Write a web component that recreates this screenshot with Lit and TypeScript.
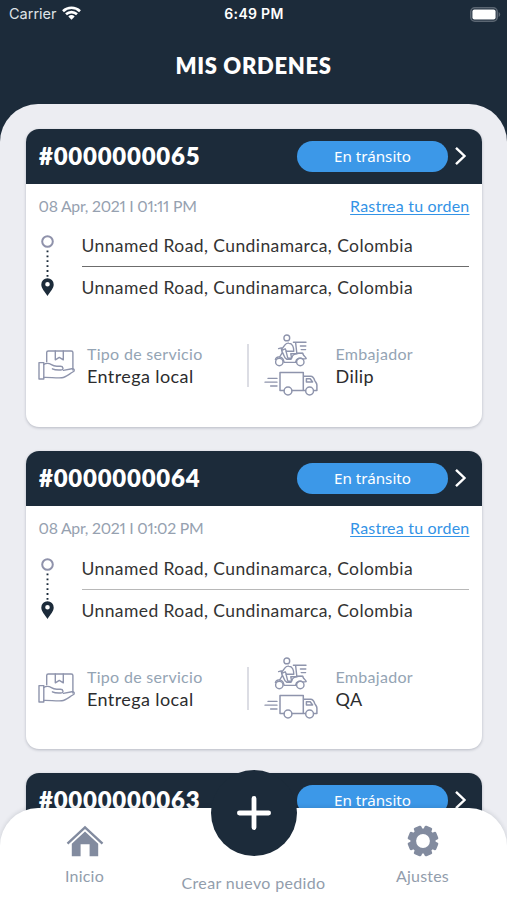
import { LitElement, html, css, svg, nothing } from "lit";
import { customElement, property } from "lit/decorators.js";

interface OrderDetails {
  date: string;
  from: string;
  to: string;
  service: string;
  ambassador: string;
}

interface Order {
  id: string;
  details?: OrderDetails;
}

const ROAD = "Unnamed Road, Cundinamarca, Colombia";

const ORDERS: Order[] = [
  { id: "#0000000065", details: { date: "08 Apr, 2021 I 01:11 PM", from: ROAD, to: ROAD, service: "Entrega local", ambassador: "Dilip" } },
  { id: "#0000000064", details: { date: "08 Apr, 2021 I 01:02 PM", from: ROAD, to: ROAD, service: "Entrega local", ambassador: "QA" } },
  { id: "#0000000063" },
];

const wifiIcon = html`<svg width="19" height="14" viewBox="0 0 19 14">
  <g fill="none" stroke="#fff" stroke-width="2.6">
    <path d="M1 5.2A12.3 12.3 0 0 1 18 5.2" />
    <path d="M4 8.3A8 8 0 0 1 15 8.3" />
  </g>
  <path d="M6.3 10.4A4.7 4.7 0 0 1 12.7 10.4L9.5 13.7Z" fill="#fff" />
</svg>`;

const batteryIcon = html`<svg width="31" height="15" viewBox="0 0 31 15">
  <rect x="0.8" y="0.8" width="26.4" height="13.4" rx="4" fill="none" stroke="#5b6672" stroke-width="1.6" />
  <rect x="2.4" y="2.6" width="23.2" height="9.8" rx="2" fill="#fff" />
  <path d="M28.6 5v5q1.6-.8 1.6-2.5T28.6 5z" fill="#5b6672" />
</svg>`;

const chevronIcon = html`<svg width="12" height="20" viewBox="0 0 12 20">
  <path d="M1 1.8L9.5 10L1 18.2" fill="none" stroke="#fff" stroke-width="2.4" />
</svg>`;

const routeIcon = html`<svg width="14" height="64" viewBox="0 0 14 64">
  <circle cx="6.5" cy="7.5" r="5.3" fill="none" stroke="#8f92ab" stroke-width="2" />
  <path d="M6.5 16.5V43" stroke="#1c2b3a" stroke-width="1.9" stroke-dasharray="1.8 3.1" />
  <path fill-rule="evenodd" fill="#1c2b3a"
    d="M6.5 44.2a6.2 6.2 0 0 0-6.2 6.3C.3 54.6 3.5 57 6.5 62c3-5 6.2-7.4 6.2-11.5A6.2 6.2 0 0 0 6.5 44.2zM6.5 48a2.3 2.3 0 1 1 0 4.6A2.3 2.3 0 0 1 6.5 48z" />
</svg>`;

const packageIcon = html`<svg width="38" height="32" viewBox="0 0 38 32">
  <g fill="none" stroke="#8e94ac" stroke-width="1.4" stroke-linejoin="round" stroke-linecap="round">
    <path d="M8.7 12.8V3.6q0-1.6 1.6-1.6h23q1.6 0 1.6 1.6V21" />
    <path d="M17.3 2v8.8l4-2.4 4 2.4V2" />
    <path d="M1 13.6h4.8V30H1z" />
    <path d="M5.8 15.4c2.4-1.4 5.4-1.2 7.6.2 1.8 1.2 3.4 1.6 5.4 1.6h3.6c3 0 3.6 3.8.6 3.8-3 0-5.6.4-8.6-1.2" />
    <path d="M25.4 21.4l8.4-1.6c3-.4 3.2 2 1 3.2-4 2.4-7.4 5.6-11 5.8-6 .4-12-.6-18-.4" />
  </g>
</svg>`;

const scooter = svg`
  <g fill="none" stroke="#8e94ac" stroke-width="1.4" stroke-linejoin="round" stroke-linecap="round">
    <circle cx="22.8" cy="3.9" r="2.9" />
    <circle cx="15.3" cy="28" r="3.7" />
    <circle cx="36.3" cy="28" r="3.7" />
    <path d="M11.4 25.6c.6-3 5.8-4 7.6-.6l1.2 3.4h12.3" />
    <path d="M14.6 14.6l2.6-.8 1 5-2.6 4.2M18 17.4l3 6.4 2 1.6h4" />
    <path d="M17.6 15.2l3.6-4.6c1-1.2 2.4-1.6 3.8-1.4 3.4.2 4.8 4.4 4.8 8h-7.4l-1.2-2.4-3 1.4" />
    <path d="M22 17.2l1.8 7h3.8l-.8-4.4h6.2" />
    <path d="M27.8 23.6c.8-3 3.4-4.2 7.2-4.2h3.6l1.2 2.2c1 1 2.2 1.8 2.4 3l-3 .4c-3.4-2-7-.4-7.6 3.2" />
    <path d="M29.4 8.2H42M31.6 8.4l1.2 10.8h6M36.4 12h5.4M37.2 15.6h4.4" />
  </g>`;

const truck = svg`
  <g fill="none" stroke="#8e94ac" stroke-width="1.5" stroke-linejoin="round" stroke-linecap="round">
    <path d="M19.8 56.5H16V38.5h23.3V56.5H28.2M39.3 42.3h7.4c2.3 0 3.2 1.6 4 4.2 1 1.8 2.2 2.4 2.2 4.6v5.4h-2.4M41.4 56.5h-2.1" />
    <circle cx="24" cy="57" r="3.9" />
    <circle cx="45.6" cy="57" r="3.9" />
    <path d="M42.4 48V44.8h3.8l2.4 3.2z" />
    <path d="M4 44.4h9M1 48.2h12M6.6 52h6.4" stroke-width="1.3" />
  </g>`;

const ambassadorIcon = html`<svg width="55" height="63" viewBox="0 0 55 63">${scooter}${truck}</svg>`;

const homeIcon = html`<svg width="38" height="32" viewBox="0 0 38 32">
  <path d="M1.5 18.6L19 2.4L36.5 18.6" fill="none" stroke="#828b9f" stroke-width="2.4" />
  <path d="M5.8 18.8L19 6.6L32.2 18.8V31.3H23.6V19.2H14.6V31.3H5.8z" fill="#828b9f" />
</svg>`;

const gearIcon = html`<svg width="32" height="32" viewBox="0 0 32 32">
  <g fill="#828b9f">
    ${[0, 45, 90, 135].map(
      (a) => svg`<rect x="11.9" y="0.6" width="8.2" height="30.8" rx="1.6" transform=${`rotate(${a + 22.5} 16 16)`} />`
    )}
    <circle cx="16" cy="16" r="12.6" />
  </g>
  <circle cx="16" cy="16" r="6.9" fill="#fff" />
</svg>`;

@customElement("status-bar")
class StatusBar extends LitElement {
  static styles = css`
    :host { display: grid; grid-template-columns: 1fr auto 1fr; align-items: center; height: 28px;
      padding: 0 6px 0 9px; color: #fff; font: 500 14px/28px Inter, sans-serif; }
    .left { display: flex; align-items: center; gap: 5px; font-weight: 400; font-size: 14.5px; color: #dfe3e7; }
    .left svg { margin-top: -2px; }
    .time { font-weight: 600; font-size: 14px; letter-spacing: 0.3px; margin-right: 2px; }
    .right { display: flex; justify-content: flex-end; }
    svg { display: block; }
  `;
  render() {
    return html`
      <div class="left"><span>Carrier</span>${wifiIcon}</div>
      <div class="time">6:49 PM</div>
      <div class="right">${batteryIcon}</div>`;
  }
}

@customElement("order-card")
class OrderCard extends LitElement {
  @property({ attribute: false }) order!: Order;

  static styles = css`
    :host { display: flex; flex-direction: column; height: 298px; background: #fff;
      border-radius: 13px; overflow: hidden; box-shadow: 0 1px 3px rgba(30, 40, 60, 0.26); }
    svg { display: block; flex: none; }
    .head { display: flex; align-items: center; height: 54.5px; padding: 0 15px 0 13px;
      box-sizing: border-box; background: #1c2b3a; color: #fff; }
    .id { flex: 1; font-size: 24px; font-weight: 800; line-height: 30px; letter-spacing: 0.75px; }
    .pill { width: 151px; height: 31px; border-radius: 16px; background: #3c98e8; margin-right: 7px;
      text-align: center; font: 400 15.2px/31px "Noto Sans", sans-serif; }
    .meta { display: flex; justify-content: space-between; padding: var(--lead, 12px) 12.5px 0 12.5px;
      line-height: 20px; font-size: 16px; }
    .date { color: #96a1b0; font-size: 15.8px; letter-spacing: -0.25px; font-variant-numeric: proportional-nums; }
    .link { color: #3393e6; text-decoration: underline; text-decoration-thickness: 1px; text-underline-offset: 2px;
      letter-spacing: 0.2px; }
    .route { display: flex; padding: 18.5px 13px 0 15px; gap: 26.5px; }
    .stops { flex: 1; font-size: 17.5px; line-height: 24px; color: #333; letter-spacing: 0.41px; }
    .from { padding-bottom: 8px; border-bottom: 1px solid var(--divider, #6c6c6c); }
    .to { padding-top: 9px; }
    .facts { display: flex; padding: 34px 13px 0 12px; }
    .service { display: flex; width: 209px; }
    .service svg { margin-top: 15px; margin-right: 11px; }
    .rule { width: 1.5px; height: 43px; margin-top: 10px; background: #dcdde4; }
    .amb { display: flex; margin-left: 15px; gap: 17px; }
    .pair { padding-top: 9px; font-size: 17px; line-height: 22px; }
    .label { color: #94a4b4; font-size: 16px; letter-spacing: 0.3px; }
    .value { color: #2c2c2e; font-size: 18px; letter-spacing: 0.4px; }
  `;

  private renderDetails(d: OrderDetails) {
    return html`
      <div class="meta"><span class="date">${d.date}</span><span class="link">Rastrea tu orden</span></div>
      <div class="route">
        ${routeIcon}
        <div class="stops"><div class="from">${d.from}</div><div class="to">${d.to}</div></div>
      </div>
      <div class="facts">
        <div class="service">
          ${packageIcon}
          <div class="pair"><div class="label">Tipo de servicio</div><div class="value">${d.service}</div></div>
        </div>
        <div class="rule"></div>
        <div class="amb">
          ${ambassadorIcon}
          <div class="pair"><div class="label">Embajador</div><div class="value">${d.ambassador}</div></div>
        </div>
      </div>`;
  }

  render() {
    const { id, details } = this.order;
    return html`
      <div class="head">
        <div class="id">${id}</div>
        <div class="pill">En tránsito</div>
        ${chevronIcon}
      </div>
      ${details ? this.renderDetails(details) : nothing}`;
  }
}

@customElement("tab-bar")
class TabBar extends LitElement {
  static styles = css`
    :host { display: grid; grid-template-columns: 169px 1fr 169px; height: 92px; background: #fff;
      border-radius: 38px 38px 0 0; box-shadow: 0 -1px 4px rgba(30, 40, 60, 0.14);
      color: #929dac; font-size: 16px; line-height: 20px; letter-spacing: 0.2px; }
    .tab { display: flex; flex-direction: column; align-items: center; padding-top: 17px; gap: 9px; }
    .tab svg { display: block; }
    .middle { display: flex; flex-direction: column; align-items: center; white-space: nowrap; }
    .fab { width: 86px; height: 86px; margin-top: -38.5px; border-radius: 50%; background: #1c2b3a;
      display: flex; align-items: center; justify-content: center; }
    .create { margin-top: 17px; letter-spacing: 0.35px; }
  `;
  render() {
    return html`
      <div class="tab">${homeIcon}<span>Inicio</span></div>
      <div class="middle">
        <div class="fab">
          <svg width="34" height="34" viewBox="0 0 34 34">
            <path d="M17 2.4V31.6M2.4 17H31.6" stroke="#fff" stroke-width="4.8" stroke-linecap="round" />
          </svg>
        </div>
        <span class="create">Crear nuevo pedido</span>
      </div>
      <div class="tab">${gearIcon}<span>Ajustes</span></div>`;
  }
}

@customElement("app-root")
class AppRoot extends LitElement {
  static styles = css`
    :host { display: flex; flex-direction: column; position: relative; width: 507px; height: 900px;
      overflow: hidden; background: #1c2b3a; font-family: Lato, sans-serif; }
    .title { height: 75.5px; box-sizing: border-box; padding-top: 22.5px; text-align: center; color: #fff;
      font-size: 22px; line-height: 30px; font-weight: 800; letter-spacing: 0.65px; }
    .panel { flex: 1; min-height: 0; overflow: hidden; display: flex; flex-direction: column; gap: 24px;
      padding: 25.5px 25px 0 26px; background: #ecedf2; border-radius: 38px 38px 0 0; }
    .panel order-card { flex: none; }
    .panel order-card:nth-child(even) { --divider: #b8b8b8; --lead: 12.5px; }
    .nav { position: absolute; left: 0; right: 0; bottom: 0; }
  `;
  render() {
    return html`
      <status-bar></status-bar>
      <div class="title">MIS ORDENES</div>
      <div class="panel">${ORDERS.map((o) => html`<order-card .order=${o}></order-card>`)}</div>
      <tab-bar class="nav"></tab-bar>`;
  }
}
